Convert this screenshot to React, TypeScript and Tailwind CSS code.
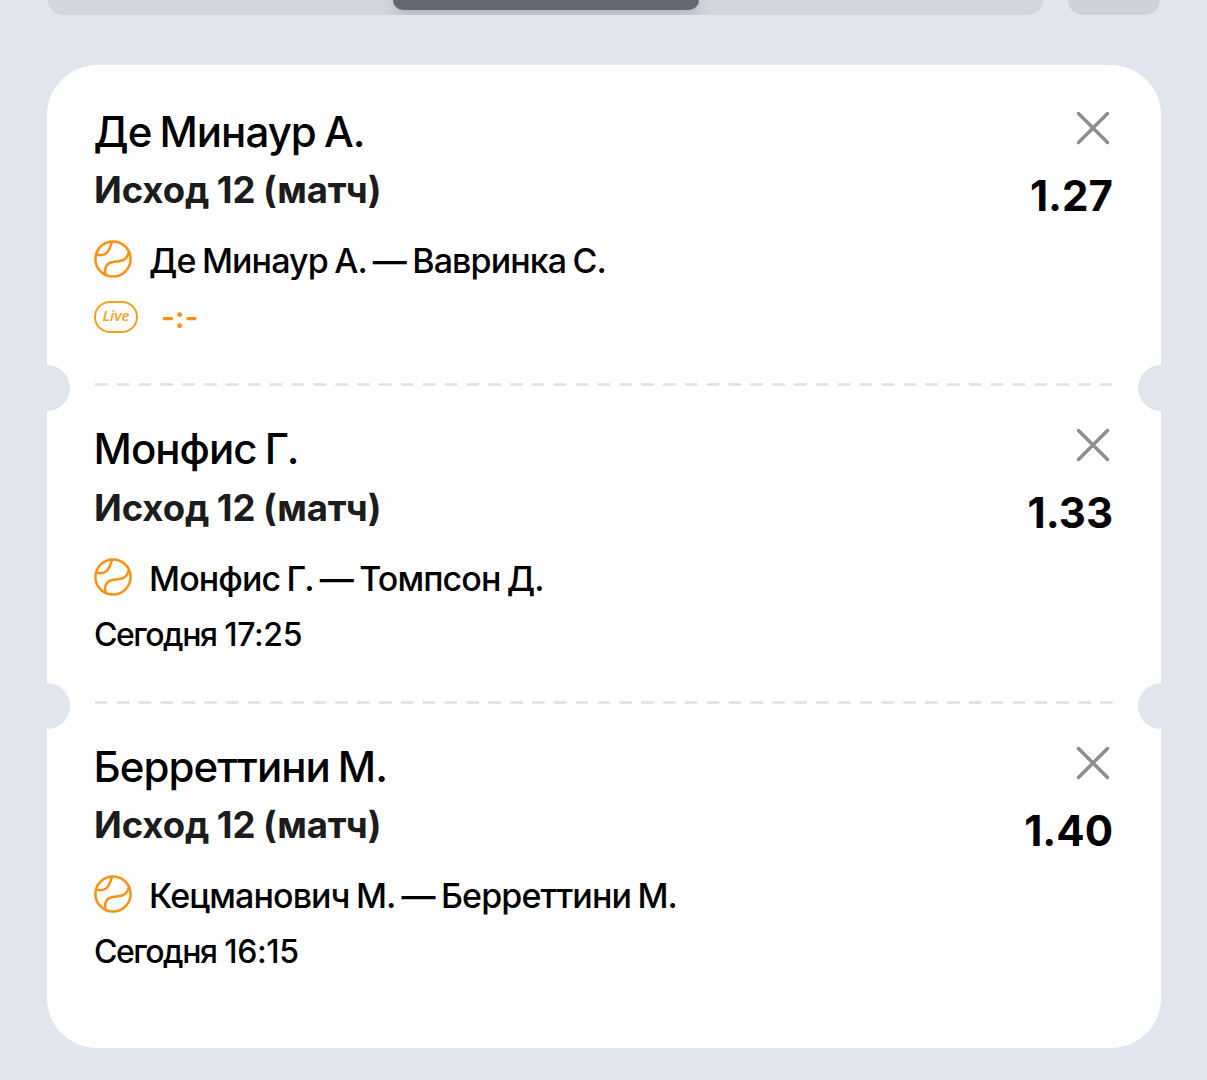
import React from "react";

type Bet = {
  player: string;
  outcome: string;
  match: string;
  odds: string;
  day?: string;
  time?: string;
  score?: string;
};

const bets: Bet[] = [
  {
    player: "Де Минаур А.",
    outcome: "Исход 12 (матч)",
    match: "Де Минаур А. — Вавринка С.",
    odds: "1.27",
    score: "-:-",
  },
  {
    player: "Монфис Г.",
    outcome: "Исход 12 (матч)",
    match: "Монфис Г. — Томпсон Д.",
    odds: "1.33",
    day: "Сегодня",
    time: "17:25",
  },
  {
    player: "Берреттини М.",
    outcome: "Исход 12 (матч)",
    match: "Кецманович М. — Берреттини М.",
    odds: "1.40",
    day: "Сегодня",
    time: "16:15",
  },
];

const TennisBall = () => (
  <svg
    className="w-[38px] h-[38px] mb-1 shrink-0"
    viewBox="0 0 38 38"
    fill="none"
    stroke="#fb9214"
    strokeWidth="2.5"
    strokeLinecap="round"
  >
    <circle cx="19" cy="19" r="17.6" />
    <path d="M2.6 14.8C11.5 16.8 15 12.5 17.9 2.2" />
    <path d="M11.6 34.6C9.8 26.5 13.5 22.6 19 21.9C27 21 33.2 20.5 34.6 12.6" />
  </svg>
);

const Cross = () => (
  <svg
    className="w-[34px] h-[34px]"
    viewBox="0 0 34 34"
    fill="none"
    stroke="#8e8e8e"
    strokeWidth="3.5"
    strokeLinecap="round"
  >
    <path d="M2.5 2.5L31.5 31.5M31.5 2.5L2.5 31.5" />
  </svg>
);

// Пунктир между ставками и вырезы по краям купона
const Divider = () => (
  <>
    <svg className="block w-[1020px] h-[3px] mx-auto" viewBox="0 0 1020 3">
      <line
        x1="1"
        y1="1.5"
        x2="1019"
        y2="1.5"
        stroke="#e0e0e0"
        strokeWidth="2.6"
        strokeDasharray="12.5 9.35"
      />
    </svg>
    <div className="absolute -bottom-[25px] -left-[23px] size-[46px] rounded-full bg-[#e0e5ee]" />
    <div className="absolute -bottom-[25px] -right-[23px] size-[46px] rounded-full bg-[#e0e5ee]" />
  </>
);

const BetRow: React.FC<{ bet: Bet; last: boolean }> = ({ bet, last }) => (
  <div className="relative h-[317.5px] flex flex-col justify-between">
    <div className="flex justify-between px-[47px] pt-[35px]">
      <div className="flex flex-col whitespace-nowrap">
        <h2 className="-ml-[0.5px] mb-[0.4px] text-[42px] leading-[56px] font-medium tracking-[-0.95px] [word-spacing:-2.2px]">
          {bet.player}
        </h2>
        <p className="text-[36.5px] leading-[60px] font-bold tracking-[-0.1px] [word-spacing:-1px] text-[#1c1c1c]">
          {bet.outcome}
        </p>
        <div className="flex items-center gap-[17px] mt-[21px] h-10">
          <TennisBall />
          <span className="text-[34px] leading-10 font-medium tracking-[-0.9px] [word-spacing:-1.8px]">
            {bet.match}
          </span>
        </div>
        <div className="flex items-center mt-4 h-10">
          {bet.time ? (
            <p className="flex gap-2 text-[32px] leading-10 font-medium">
              <span className="tracking-[-1.5px]">{bet.day}</span>
              <span className="tracking-[-0.4px]">{bet.time}</span>
            </p>
          ) : (
            <>
              <span className="flex items-center justify-center w-11 h-8 mb-px pb-[3px] rounded-full border-[2.5px] border-[#f7a01c] font-['Open_Sans',sans-serif] text-[15px] leading-none font-semibold italic text-[#f7a01c]">
                Live
              </span>
              <span className="ml-[23px] text-[30px] leading-10 font-semibold text-[#fb9214]">
                {bet.score}
              </span>
            </>
          )}
        </div>
      </div>
      <div className="flex flex-col items-end pt-[7px]">
        <button className="mr-1">
          <Cross />
        </button>
        <span className="mr-px mt-[23px] text-[42px] leading-[56px] font-bold">
          {bet.odds}
        </span>
      </div>
    </div>
    {!last && <Divider />}
  </div>
);

const App: React.FC = () => {
  return (
    <main className="h-[1080px] overflow-hidden bg-[#e0e5ee] font-[Inter,sans-serif] text-black">
      <div className="flex h-[15px]">
        <div className="ml-12 flex w-[995px] h-[15px] justify-center overflow-hidden rounded-b-[22px] bg-[#d3d6df]">
          <div className="h-[10px] w-[306px] rounded-b-[13px] bg-[#666775] shadow-[0_2px_14px_rgba(0,0,0,0.25)]" />
        </div>
        <div className="ml-[25px] h-[15px] w-[92px] rounded-b-[22px] bg-[#cfd2da]" />
      </div>
      <section className="mt-[50px] ml-[47px] h-[983px] w-[1114px] overflow-hidden rounded-[50px] bg-white pt-[3.9px]">
        {bets.map((bet, index) => (
          <BetRow key={index} bet={bet} last={index === bets.length - 1} />
        ))}
      </section>
    </main>
  );
};

export default App;
